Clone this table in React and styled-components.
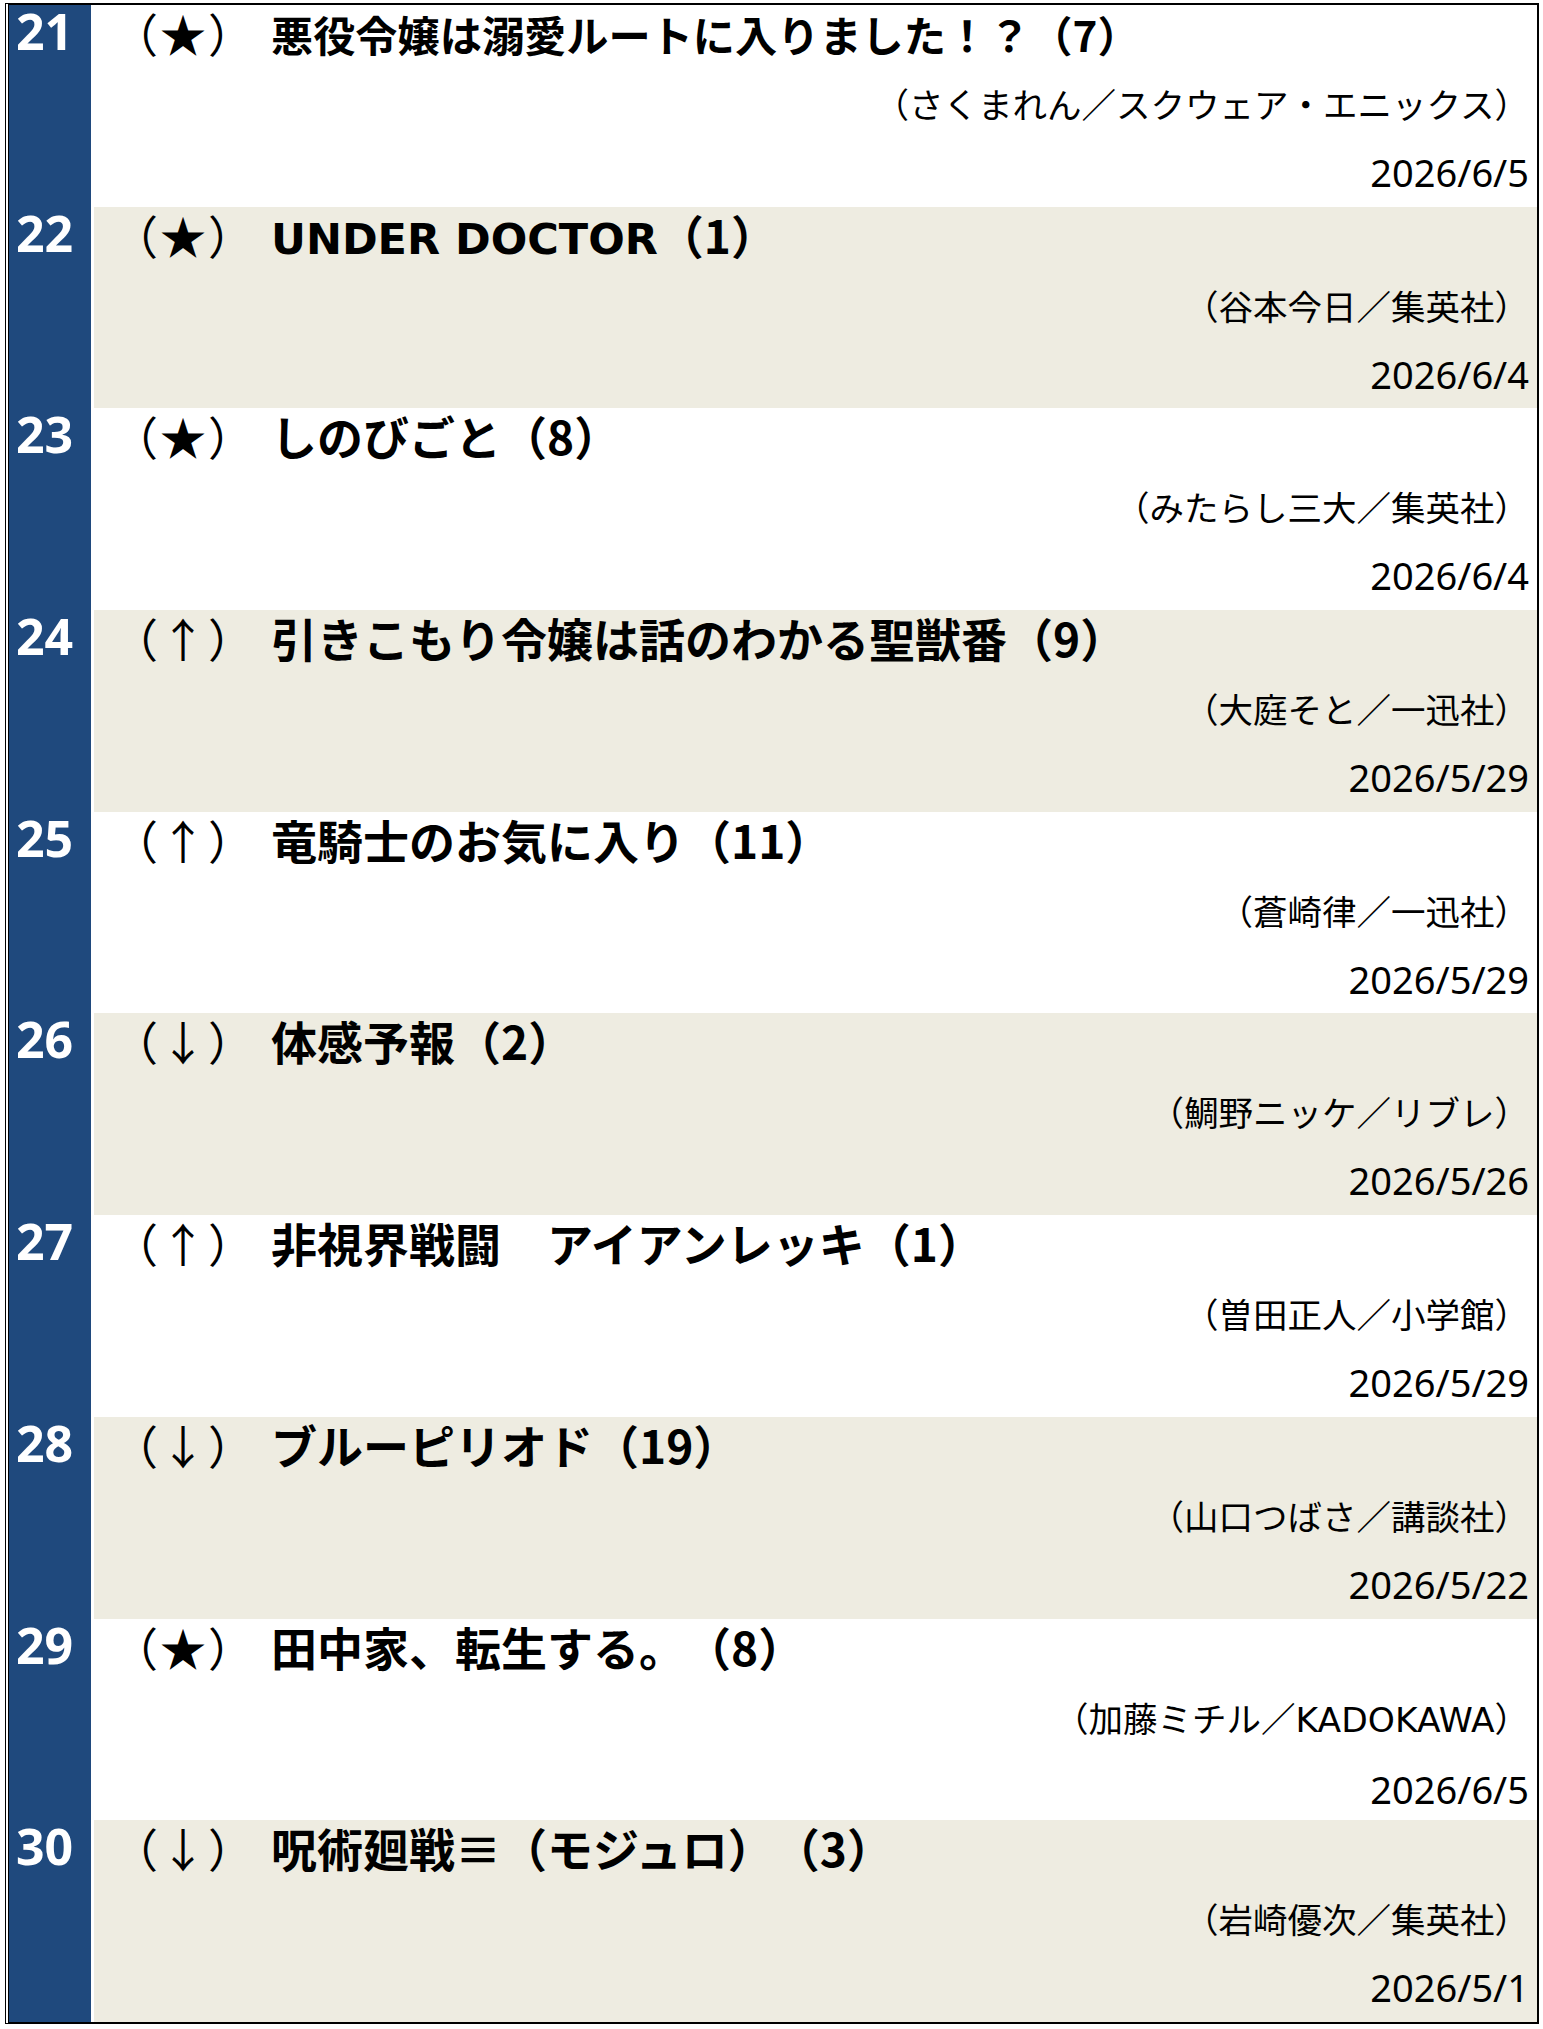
import React from "react";
import styled, { createGlobalStyle } from "styled-components";

const GlobalStyle = createGlobalStyle`
  html, body {
    margin: 0;
    padding: 0;
    background: #ffffff;
  }
  body {
    font-family: "Noto Sans CJK JP", "Noto Sans", sans-serif;
    color: #000;
    text-spacing-trim: space-all;
  }
`;

const Table = styled.div`
  margin: 3px 0 0 5px;
  width: 1534px;
  box-sizing: border-box;
  border-top: 2px solid #000;
  border-right: 2px solid #000;
  border-bottom: 2px solid #000;
  border-left: 4px double #000;
  background: #fff;
`;

const Row = styled.div`
  display: grid;
  grid-template-columns: 82px 1fr;
  column-gap: 3px;
  height: 201.7px;
  background: #fff;
`;

const Rank = styled.div`
  background: #1f497d;
  color: #fff;
  font-family: "Noto Sans", sans-serif;
  font-weight: 700;
  font-size: 50px;
  line-height: 52px;
  padding-left: 7px;
`;

const Cell = styled.div`
  background: ${(p) => (p.$shaded ? "#eeece1" : "#ffffff")};
  display: flex;
  flex-direction: column;
  padding-left: 18px;
`;

const TitleLine = styled.div`
  display: flex;
  align-items: baseline;
  height: 54px;
`;

const Mark = styled.span`
  flex: 0 0 159px;
  font-family: "Noto Sans CJK JP", sans-serif;
  font-weight: 400;
  font-size: 46px;
  letter-spacing: 2px;
  line-height: 54px;
  white-space: nowrap;
`;

const Title = styled.span`
  font-family: "Noto Sans CJK JP", sans-serif;
  font-weight: 700;
  font-size: ${(p) => p.$size}px;
  line-height: 54px;
  white-space: nowrap;
`;

const TitleLatin = styled.span`
  font-family: "DejaVu Sans", sans-serif;
  font-weight: 700;
  font-size: 43px;
`;

const Author = styled.div`
  font-family: "Noto Sans CJK JP", sans-serif;
  font-weight: 400;
  font-size: 34.5px;
  line-height: 88px;
  text-align: right;
  padding-right: 8px;
  white-space: nowrap;
`;

const AuthorLatin = styled.span`
  font-family: "DejaVu Sans", sans-serif;
  font-weight: 400;
  font-size: 34.5px;
`;

const DateText = styled.div`
  font-family: "Noto Sans", sans-serif;
  font-weight: 400;
  font-size: 38px;
  line-height: 50px;
  text-align: right;
  padding-right: 8px;
  white-space: nowrap;
`;

const rows = [
  { rank: 21, mark: "★", size: 42.2, title: "悪役令嬢は溺愛ルートに入りました！？（7）", author: "（さくまれん／スクウェア・エニックス）", date: "2026/6/5" },
  { rank: 22, mark: "★", size: 46, title: "UNDER DOCTOR（1）", author: "（谷本今日／集英社）", date: "2026/6/4" },
  { rank: 23, mark: "★", size: 46, title: "しのびごと（8）", author: "（みたらし三大／集英社）", date: "2026/6/4" },
  { rank: 24, mark: "↑", size: 46, title: "引きこもり令嬢は話のわかる聖獣番（9）", author: "（大庭そと／一迅社）", date: "2026/5/29" },
  { rank: 25, mark: "↑", size: 46, title: "竜騎士のお気に入り（11）", author: "（蒼崎律／一迅社）", date: "2026/5/29" },
  { rank: 26, mark: "↓", size: 46, title: "体感予報（2）", author: "（鯛野ニッケ／リブレ）", date: "2026/5/26" },
  { rank: 27, mark: "↑", size: 46, title: "非視界戦闘　アイアンレッキ（1）", author: "（曽田正人／小学館）", date: "2026/5/29" },
  { rank: 28, mark: "↓", size: 46, title: "ブルーピリオド（19）", author: "（山口つばさ／講談社）", date: "2026/5/22" },
  { rank: 29, mark: "★", size: 46, title: "田中家、転生する。（8）", author: "（加藤ミチル／KADOKAWA）", date: "2026/6/5" },
  { rank: 30, mark: "↓", size: 46, title: "呪術廻戦≡（モジュロ）（3）", author: "（岩崎優次／集英社）", date: "2026/5/1" },
];

const LATIN = /([A-Za-z][A-Za-z ]*[A-Za-z])/;

function withLatin(text, LatinPart) {
  return text.split(LATIN).map((part, i) =>
    i % 2 === 1 ? <LatinPart key={i}>{part}</LatinPart> : part
  );
}

export default function App() {
  return (
    <>
      <GlobalStyle />
      <Table>
        {rows.map((r, i) => (
          <Row key={r.rank}>
            <Rank>{r.rank}</Rank>
            <Cell $shaded={i % 2 === 1}>
              <TitleLine>
                <Mark>（{r.mark}）</Mark>
                <Title $size={r.size}>{withLatin(r.title, TitleLatin)}</Title>
              </TitleLine>
              <Author>{withLatin(r.author, AuthorLatin)}</Author>
              <DateText>{r.date}</DateText>
            </Cell>
          </Row>
        ))}
      </Table>
    </>
  );
}
